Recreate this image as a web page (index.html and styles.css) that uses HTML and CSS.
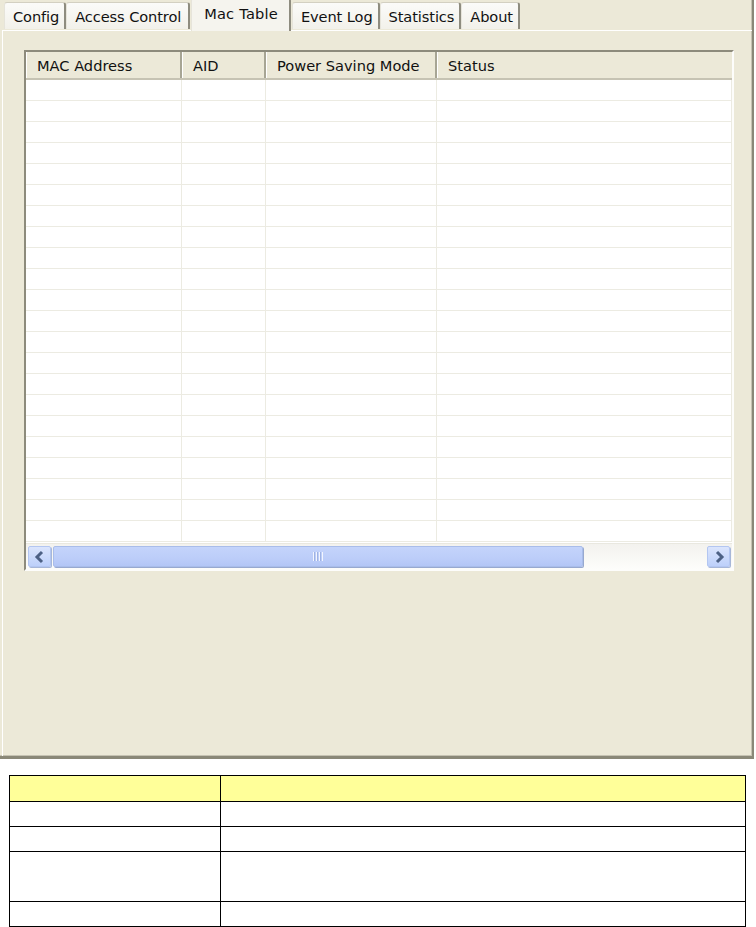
FILE: index.html
```html
<!DOCTYPE html>
<html lang="en">

<head>
  <meta charset="UTF-8">
  <title>Mac Table</title>
  <link rel="stylesheet" href="styles.css">
</head>

<body>
  <div class="window">
    <div class="tabs">
      <div class="tab">Config</div>
      <div class="tab wide">Access Control</div>
      <div class="tab active">Mac Table</div>
      <div class="tab">Event Log</div>
      <div class="tab">Statistics</div>
      <div class="tab">About</div>
    </div>

    <div class="panel">
      <div class="listview">
        <div class="lv-header">
          <div class="col c1">MAC Address</div>
          <div class="col c2">AID</div>
          <div class="col c3">Power Saving Mode</div>
          <div class="col c4">Status</div>
        </div>
        <div class="lv-body" id="rows"></div>
        <div class="hscroll">
          <div class="sbtn">
            <svg width="14" height="14" viewBox="0 0 14 14"><path d="M9 2 L4 7 L9 12" fill="none" stroke="#4d6185" stroke-width="3"/></svg>
          </div>
          <div class="track">
            <div class="thumb"><span class="grip"></span></div>
          </div>
          <div class="sbtn">
            <svg width="14" height="14" viewBox="0 0 14 14"><path d="M5 2 L10 7 L5 12" fill="none" stroke="#4d6185" stroke-width="3"/></svg>
          </div>
        </div>
      </div>
    </div>
  </div>

  <table class="desc">
    <tr class="head"><td class="k"></td><td></td></tr>
    <tr><td class="k"></td><td></td></tr>
    <tr><td class="k"></td><td></td></tr>
    <tr class="tall"><td class="k"></td><td></td></tr>
    <tr><td class="k"></td><td></td></tr>
  </table>

  <script>
    // empty grid rows of the list view
    const rows = document.getElementById('rows');
    for (let i = 0; i < 22; i++) {
      const r = document.createElement('div');
      r.className = 'row';
      r.innerHTML = '<div class="cell c1"></div><div class="cell c2"></div><div class="cell c3"></div><div class="cell c4"></div>';
      rows.appendChild(r);
    }
  </script>
</body>

</html>
```

FILE: styles.css
```css
body {
  margin: 0;
  background: #fff;
  font-family: "DejaVu Sans", Tahoma, sans-serif;
  font-size: 14.6px;
  color: #111;
}

.window {
  width: 752px;
  height: 756px;
  background: #ece9d8;
  border-right: 2px solid #8a8878;
  border-bottom: 3px solid #8a8878;
  box-shadow: inset -1px -1px 0 #c5c2b2;
  display: flex;
  flex-direction: column;
}

.tabs {
  display: flex;
  align-items: flex-end;
  height: 30px;
  padding-left: 4px;
}

.tab {
  height: 26px;
  padding: 0 5px 0 8px;
  display: flex;
  align-items: center;
  background: linear-gradient(#fbfbf9, #f2f1ea);
  border-top: 1px solid #d3d0c2;
  border-left: 1px solid #e6e4da;
  border-right: 2px solid #8e8c7f;
  border-radius: 3px 3px 0 0;
  margin-bottom: 1px;
  letter-spacing: -0.1px;
}

.tab.wide {
  padding-right: 7px;
}

.tab.active {
  height: 28px;
  margin: 0 1px -1px 1px;
  padding: 0 11px 4px 12px;
  background: #f5f4ee;
  position: relative;
  z-index: 1;
  letter-spacing: 0.2px;
}

.panel {
  flex: 1;
  margin-left: 2px;
  border-top: 1px solid #fff;
  border-left: 1px solid #fff;
  padding: 19px 0 0 21px;
}

.listview {
  width: 706px;
  height: 517px;
  border: 2px solid;
  border-color: #8d8b7c #fdfdfb #fdfdfb #8d8b7c;
  background: #fff;
  display: flex;
  flex-direction: column;
}

.lv-header {
  display: flex;
  height: 26px;
  background: #ece9d8;
  border-bottom: 2px solid #c6c3b3;
}

.col {
  display: flex;
  align-items: center;
  padding-left: 10px;
  box-sizing: border-box;
  border-left: 1px solid #fff;
  border-right: 2px solid #a7a594;
}

.c1 { width: 156px; }
.c2 { width: 84px; }
.c3 { width: 171px; }
.c4 { flex: 1; border-right: none; }

.lv-body {
  flex: 1;
  overflow: hidden;
}

.row {
  display: flex;
  height: 21px;
  box-sizing: border-box;
  border-bottom: 1px solid #ecebe2;
}

.cell {
  box-sizing: border-box;
  border-right: 1px solid #ecebe2;
}

.hscroll {
  display: flex;
  align-items: center;
  height: 25px;
  padding: 0 2px 0 2px;
  background: linear-gradient(#f3f2ee, #fdfdfb);
  border-top: 1px solid #e9e8e0;
}

.sbtn {
  width: 21px;
  height: 19px;
  border: 1px solid #b3c6f1;
  border-radius: 2px;
  background: linear-gradient(#dbe5fd, #bdd0fa);
  box-shadow: 1px 1px 0 #a7b7d8;
  display: flex;
  align-items: center;
  justify-content: center;
}

.track {
  flex: 1;
  height: 21px;
  padding: 0 2px;
  display: flex;
  align-items: center;
}

.thumb {
  width: 528px;
  height: 19px;
  border: 1px solid #a9bdea;
  border-radius: 2px;
  background: linear-gradient(#c4d4fb, #bccdf9 60%, #b3c6f6);
  box-shadow: 1px 1px 0 #98a9cf;
  display: flex;
  align-items: center;
  justify-content: center;
}

.grip {
  width: 10px;
  height: 9px;
  background: repeating-linear-gradient(90deg, #f2f5fe 0 1px, #9fb3e3 1px 2px, transparent 2px 3px);
}

.desc {
  margin: 16px 0 0 9px;
  width: 737px;
  border-collapse: collapse;
}

.desc td {
  border: 1px solid #000;
  height: 24px;
  padding: 0;
}

.desc td.k {
  width: 210px;
}

.desc tr.head td {
  background: #ffff99;
  height: 25px;
}

.desc tr.tall td {
  height: 49px;
}
```
